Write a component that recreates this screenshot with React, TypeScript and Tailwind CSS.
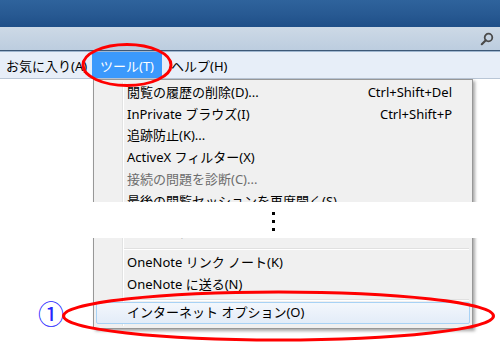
import React from 'react';

type Item = {
  label: string;
  shortcut?: string;
  disabled?: boolean;
};

const topItems: Item[] = [
  { label: '閲覧の履歴の削除(D)...', shortcut: 'Ctrl+Shift+Del' },
  { label: 'InPrivate ブラウズ(I)', shortcut: 'Ctrl+Shift+P' },
  { label: '追跡防止(K)...' },
  { label: 'ActiveX フィルター(X)' },
  { label: '接続の問題を診断(C)...', disabled: true },
  { label: '最後の閲覧セッションを再度開く(S)' },
];

const MenuRow: React.FC<{ item: Item }> = ({ item }) => (
  <div
    className={`relative flex h-[21.7px] items-center justify-between pl-[31px] pr-[18px] ${
      item.disabled ? 'text-[#6d6d6d]' : 'text-black'
    }`}>
    <span>{item.label}</span>
    {item.shortcut && <span>{item.shortcut}</span>}
  </div>
);

const Separator: React.FC<{ className: string }> = ({ className }) => (
  <div className={`pl-[28px] pr-[1px] ${className}`}>
    <div className="h-[1px] bg-[#e0e0e0]" />
    <div className="h-[1px] bg-white" />
  </div>
);

const App: React.FC = () => {
  return (
    <div
      className="relative h-[350px] w-[500px] overflow-hidden bg-white text-[13px]"
      style={{ fontFamily: '"Noto Sans", "Noto Sans CJK JP", sans-serif' }}>
      {/* window chrome */}
      <div className="h-[27px] bg-gradient-to-b from-[#2f639c] via-[#285a93] to-[#1f4f88]" />
      <div className="flex h-[23px] items-center justify-end bg-gradient-to-b from-[#cdd9e6] to-[#bccddf] pr-[6px]">
        <svg width="14" height="14" viewBox="0 0 14 14" fill="none">
          <circle cx="8.5" cy="5.5" r="3.8" stroke="#4a4a4a" strokeWidth="1.8" />
          <path d="M5.8 8.2 L1.8 12.2" stroke="#4a4a4a" strokeWidth="2.2" strokeLinecap="round" />
        </svg>
      </div>
      <div className="h-[1px] bg-[#3d5877]" />
      <div className="h-[1px] bg-[#9fb6cf]" />

      {/* menu bar */}
      <div className="flex h-[27px] items-stretch border-b border-[#b9c6d6] bg-[#e7eef8] text-black">
        <div className="flex w-[92px] items-center pl-[6px] pt-[3px]">お気に入り(A)</div>
        <div className="flex w-[70px] items-center justify-center bg-[#3b99fc] pt-[3px] text-white">ツール(T)</div>
        <div className="flex items-center pl-[9px] pt-[3px]">ヘルプ(H)</div>
      </div>

      {/* dropdown */}
      <div className="absolute left-[93px] top-[79px] w-[380px] border border-[#979797] bg-[#f0f0f0] p-[2px] shadow-[2px_2px_3px_rgba(0,0,0,0.35)]">
        <div className="absolute bottom-[2px] left-[28px] top-[2px] flex">
          <div className="w-[1px] bg-[#e2e3e3]" />
          <div className="w-[1px] bg-white" />
        </div>
        {topItems.map((item) => (
          <MenuRow key={item.label} item={item} />
        ))}
        <div className="h-[9px]" />
        <MenuRow item={{ label: 'F12 開発者ツール(L)' }} />
        <Separator className="pt-[5px] pb-[2px]" />
        <MenuRow item={{ label: 'OneNote リンク ノート(K)' }} />
        <MenuRow item={{ label: 'OneNote に送る(N)' }} />
        <Separator className="pt-[4px] pb-[1px]" />
        <div className="relative flex h-[22px] items-center rounded-[2px] border border-[#a8d2f5] bg-gradient-to-b from-[#f3f7fc] to-[#e3ecf8] pl-[30px] text-black">
          インターネット オプション(O)
        </div>
        <div className="h-[2px]" />
      </div>

      {/* omitted region */}
      <div className="absolute left-0 right-0 top-[202px] flex h-[36px] flex-col items-center gap-[5px] bg-white pl-[46px] pt-[10px]">
        <div className="h-[3px] w-[3px] bg-black" />
        <div className="h-[3px] w-[3px] bg-black" />
        <div className="h-[3px] w-[3px] bg-black" />
      </div>

      {/* step marker */}
      <div className="absolute left-[38px] top-[301px] text-[26px] leading-none text-[#2626ff]">①</div>

      {/* annotations */}
      <svg className="pointer-events-none absolute left-0 top-0" width="500" height="350">
        <ellipse cx="127" cy="65" rx="44" ry="20.5" fill="none" stroke="#ff0000" strokeWidth="3" />
        <ellipse cx="278.5" cy="316" rx="215" ry="24" fill="none" stroke="#ff0000" strokeWidth="3" />
      </svg>
    </div>
  );
};

export default App;
